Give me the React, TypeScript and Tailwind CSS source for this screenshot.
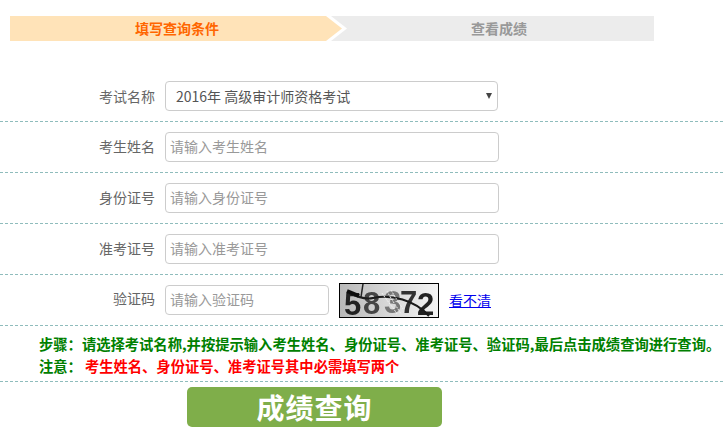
import React from 'react';

const cjk = { fontFamily: '"Noto Sans CJK SC", "Liberation Sans", sans-serif' };

const FormRow: React.FC<{ label: string; children: React.ReactNode }> = ({ label, children }) => (
  <div className="flex h-[51px] items-start border-b border-dashed border-[#8fbcbc] pt-[10px]">
    <label className="mr-[10px] w-[155px] pt-[3px] text-right text-[14px] leading-[22px] text-[#666]">{label}</label>
    {children}
  </div>
);

const TextInput: React.FC<{ placeholder: string; width: string }> = ({ placeholder, width }) => (
  <input
    placeholder={placeholder}
    style={cjk}
    className={`${width} h-[30px] rounded-[4px] border border-[#ccc] bg-white px-[4px] pb-[2px] text-[14px] text-[#555] outline-none placeholder:text-[#999]`}
  />
);

const Captcha = () => (
  <svg width="100" height="35" viewBox="0 0 100 35" className="ml-[10px] block overflow-visible">
    <defs>
      <linearGradient id="captchaBg" x1="0" x2="1" y1="0" y2="0">
        <stop offset="0" stopColor="#b8b8b8" />
        <stop offset="0.5" stopColor="#d8d8d8" />
        <stop offset="1" stopColor="#f4f4f4" />
      </linearGradient>
      <filter id="captchaBlur"><feGaussianBlur stdDeviation="0.45" /></filter>
    </defs>
    <rect x="0.5" y="0.5" width="99" height="34" fill="url(#captchaBg)" stroke="#000" />
    <g filter="url(#captchaBlur)" fontFamily="Liberation Sans, sans-serif" fontWeight="700" fontSize="31">
      <text x="5" y="32" fill="#222">5</text>
      <text x="24" y="31" fill="#444">8</text>
      <text x="45" y="30" fill="#777">3</text>
      <text x="61" y="30" fill="#333">7</text>
      <text x="78" y="32" fill="#222">2</text>
      <path d="M8 9 C 18 14 26 17 34 15 C 52 11 76 17 90 33" fill="none" stroke="#1a1a1a" strokeWidth="2" />
      <path d="M24 1 L22 14" fill="none" stroke="#222" strokeWidth="1.5" />
      <path d="M8 8 L20 13" fill="none" stroke="#111" strokeWidth="4" />
      <path d="M43 10 C 48 18 54 24 58 31 M48 8 C 52 16 58 24 62 31 M52 7 C 56 14 60 20 64 26" fill="none" stroke="#f0f0f0" strokeWidth="1" strokeDasharray="2 1" />
    </g>
  </svg>
);

export default function App() {
  return (
    <div className="h-[430px] w-[723px] overflow-hidden bg-white pt-[16px]" style={cjk}>
      <div className="relative ml-[10px] flex h-[25px] w-[644px] bg-[#ececec] text-[14px] font-bold leading-[25px]">
        <div className="absolute left-0 top-0 h-[25px] w-[337px] bg-white [clip-path:polygon(0_0,calc(100%-16px)_0,100%_50%,calc(100%-16px)_100%,0_100%)]" />
        <div className="absolute left-0 top-0 h-[25px] w-[332px] bg-[#ffe3b8] [clip-path:polygon(0_0,calc(100%-16px)_0,100%_50%,calc(100%-16px)_100%,0_100%)]" />
        <span className="relative w-[334px] text-center text-[#ff6600]">填写查询条件</span>
        <span className="relative w-[310px] text-center text-[#999]">查看成绩</span>
      </div>

      <div className="mt-[25px]">
        <div className="flex h-[56px] items-start border-b border-dashed border-[#8fbcbc] pt-[15px]">
          <label className="mr-[10px] w-[155px] pt-[4px] text-right text-[14px] leading-[22px] text-[#666]">考试名称</label>
          <div className="relative">
            <select
              defaultValue="2016"
              style={cjk}
              className="h-[30px] w-[333px] appearance-none rounded-[4px] border border-[#ccc] bg-white pl-[10px] text-[14px] text-[#555] outline-none"
            >
              <option value="2016">2016年 高级审计师资格考试</option>
            </select>
            <span className="absolute right-[6px] top-[12px] h-0 w-0 border-x-[3px] border-t-[6px] border-x-transparent border-t-[#444]" />
          </div>
        </div>

        <FormRow label="考生姓名"><TextInput placeholder="请输入考生姓名" width="w-[334px]" /></FormRow>
        <FormRow label="身份证号"><TextInput placeholder="请输入身份证号" width="w-[334px]" /></FormRow>
        <FormRow label="准考证号"><TextInput placeholder="请输入准考证号" width="w-[334px]" /></FormRow>

        <div className="flex h-[51px] items-start border-b border-dashed border-[#8fbcbc] pt-[8px]">
          <label className="mr-[10px] w-[155px] pt-[4px] text-right text-[14px] leading-[22px] text-[#666]">验证码</label>
          <div className="pt-[2px]"><TextInput placeholder="请输入验证码" width="w-[164px]" /></div>
          <Captcha />
          <a href="#" className="ml-[10px] pt-[6px] text-[14px] leading-[22px] text-[#0000ee] underline">看不清</a>
        </div>

        <div className="h-[56px] border-b border-dashed border-[#8fbcbc] pl-[39px] pt-[7px] text-[14.3px] font-bold leading-[22px] text-[#008000]">
          <p className="whitespace-nowrap">步骤：请选择考试名称,并按提示输入考生姓名、身份证号、准考证号、验证码,最后点击成绩查询进行查询。</p>
          <p className="whitespace-nowrap">注意：<span className="ml-[3px] text-[#ff0000]">考生姓名、身份证号、准考证号其中必需填写两个</span></p>
        </div>
      </div>

      <button className="ml-[187px] mt-[5px] block h-[40px] w-[255px] rounded-[5px] bg-[#7fae4a] text-[28px] font-bold leading-[40px] tracking-[1px] text-white">
        成绩查询
      </button>
    </div>
  );
}
